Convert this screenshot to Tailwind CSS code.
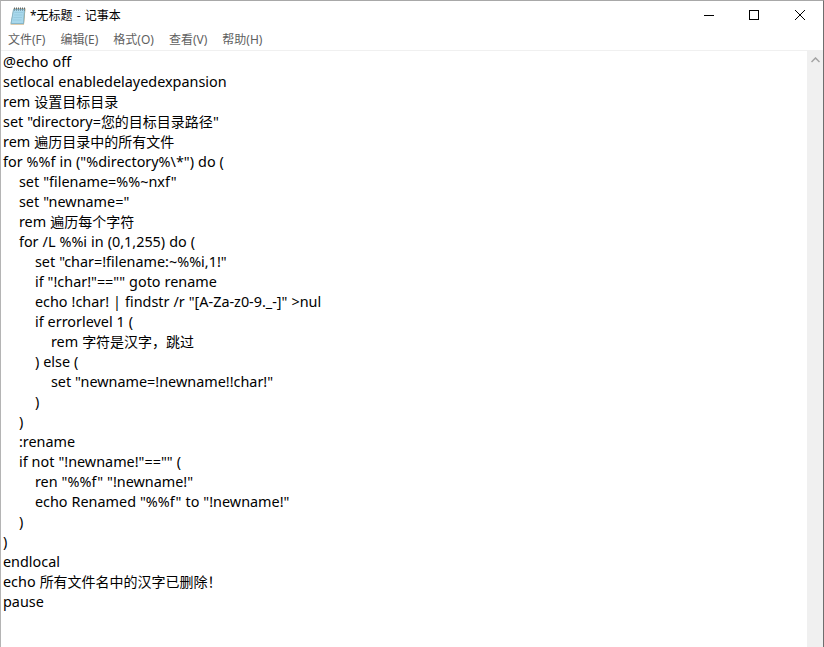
<!DOCTYPE html>
<html lang="zh-CN">
  <head>
    <meta charset="UTF-8" />
    <script src="https://cdn.jsdelivr.net/npm/@tailwindcss/browser@4"></script>
    <title>*无标题 - 记事本</title>
  </head>
  <body class="w-[824px] h-[647px] overflow-hidden bg-white font-['Noto_Sans','Noto_Sans_CJK_SC',sans-serif]">
    <div class="h-full flex flex-col border-t border-t-[#a8a8a8] border-l border-l-[#b4b4b4] border-r border-r-[#6e6e6e]">
      <!-- title bar -->
      <div class="h-[29px] flex items-center shrink-0">
        <svg class="ml-[9px] w-[16px] h-[19px] mt-[1px]" viewBox="0 0 16 19">
          <path d="M3.500 1.500h12l-1.500 16H0.500z" fill="#b7975f" />
          <path d="M3.500 2.500h11l-1 14H1z" fill="#a8d8ec" stroke="#86b6ca" />
          <path d="M4.500 5.500h8.500M4 8h8.500M3.500 10.500h8.500M3 13h8.500" stroke="#98cbe0" />
          <path d="M4.500 0.500v3M6.500 0.500v3M8.500 0.500v3M10.500 0.500v3M12.500 0.500v3M14.500 0.500v3" stroke="#5a6a72" stroke-dasharray="1.500 0.500" />
        </svg>
        <span class="ml-[4px] text-[12px] [word-spacing:1px] text-black">*无标题 - 记事本</span>
        <div class="ml-auto flex items-center">
          <svg class="w-[46px] h-[29px]" viewBox="0 0 46 29"><path d="M19 14.500h10" stroke="#000" /></svg>
          <svg class="w-[46px] h-[29px]" viewBox="0 0 46 29"><rect x="18.500" y="9.500" width="9" height="9" fill="none" stroke="#000" /></svg>
          <svg class="w-[46px] h-[29px]" viewBox="0 0 46 29"><path d="M18 9l10 10M28 9l-10 10" stroke="#000" /></svg>
        </div>
      </div>
      <!-- menu -->
      <div class="h-[20px] flex items-center shrink-0 text-[12px] text-[#5f5f5f] pl-[7px] gap-[15px]">
        <span>文件(F)</span>
        <span>编辑(E)</span>
        <span>格式(O)</span>
        <span>查看(V)</span>
        <span>帮助(H)</span>
      </div>
      <div class="h-[1px] bg-[#f0f0f0] shrink-0"></div>
      <!-- editor -->
      <div class="flex-1 flex min-h-0">
        <pre class="flex-1 pl-[2px] pt-[1px] text-[14.4px] leading-[20px] [word-spacing:0.25px] text-black font-['Noto_Sans','Noto_Sans_CJK_SC',sans-serif]">@echo off
setlocal enabledelayedexpansion
rem <span class="text-[14px]">设置目标目录</span>
set "directory=<span class="text-[14px]">您的目标目录路径</span>"
rem <span class="text-[14px]">遍历目录中的所有文件</span>
for %%f in ("%directory%\*") do (
    set "filename=%%~nxf"
    set "newname="
    rem <span class="text-[14px]">遍历每个字符</span>
    for /L %%i in (0,1,255) do (
        set "char=!filename:~%%i,1!"
        if "!char!"=="" goto rename
        echo !char! | findstr /r "[A-Za-z0-9._-]" &gt;nul
        if errorlevel 1 (
            rem <span class="text-[14px]">字符是汉字，跳过</span>
        ) else (
            set "newname=!newname!!char!"
        )
    )
    :rename
    if not "!newname!"=="" (
        ren "%%f" "!newname!"
        echo Renamed "%%f" to "!newname!"
    )
)
endlocal
echo <span class="text-[14px]">所有文件名中的汉字已删除！</span>
pause</pre>
        <div class="w-[16px] bg-[#f0f0f0] shrink-0 flex justify-center pt-[6px]">
          <svg class="w-[9px] h-[6px]" viewBox="0 0 9 6"><path d="M0.500 5L4.500 1l4 4" fill="none" stroke="#a3a3a3" stroke-width="1.500" /></svg>
        </div>
      </div>
    </div>
  </body>
</html>
